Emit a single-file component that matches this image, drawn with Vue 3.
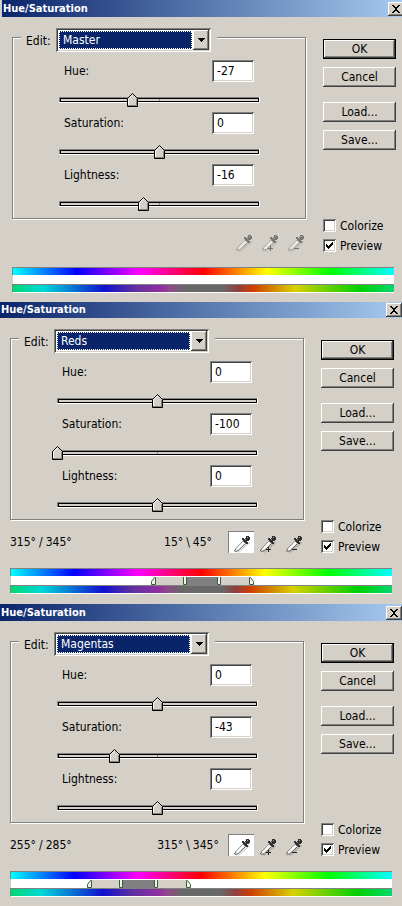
<script setup>
import { reactive } from 'vue'

const editOptions = ['Master', 'Reds', 'Yellows', 'Greens', 'Cyans', 'Blues', 'Magentas']

const pickers = [
  { name: 'Eyedropper', sign: '' },
  { name: 'Add to sample', sign: 'M6 13.5h5M8.5 11v5' },
  { name: 'Subtract from sample', sign: 'M6 13.5h5' }
]

function sliders(hue, saturation, lightness) {
  return [
    { label: 'Hue:', value: hue },
    { label: 'Saturation:', value: saturation },
    { label: 'Lightness:', value: lightness }
  ]
}

const dialogs = reactive([
  { id: 'master', edit: 'Master', sliders: sliders(-27, 0, -16), range: null, colorize: false, preview: true },
  { id: 'reds', edit: 'Reds', sliders: sliders(0, -100, 0), range: [315, 345, 15, 45], colorize: false, preview: true },
  { id: 'magentas', edit: 'Magentas', sliders: sliders(0, -43, 0), range: [255, 285, 315, 345], colorize: false, preview: true }
])

// the colour bar starts at 180 degrees and wraps around
function hueToPercent(deg) {
  return (((deg + 180) % 360) / 360) * 100
}

function segment(range, from, to) {
  return { width: hueToPercent(range[to]) - hueToPercent(range[from]) + '%' }
}
</script>

<template>
  <main class="stack">
    <section v-for="d in dialogs" :key="d.id" class="dialog" :class="d.id">
      <header class="titlebar">
        <h2>Hue/Saturation</h2>
        <button type="button" class="close" aria-label="Close">
          <svg width="8" height="8" viewBox="0 0 8 8">
            <path d="M0 0h2v1h1v1h2v-1h1v-1h2v1h-1v1h-1v1h-1v2h1v1h1v1h1v1h-2v-1h-1v-1h-2v1h-1v1h-2v-1h1v-1h1v-1h1v-2h-1v-1h-1v-1h-1z" />
          </svg>
        </button>
      </header>

      <div class="body">
        <div class="left">
          <fieldset>
            <legend>
              <label :for="d.id + '-edit'">Edit:</label>
              <span class="combo">
                <select :id="d.id + '-edit'" v-model="d.edit">
                  <option v-for="o in editOptions" :key="o">{{ o }}</option>
                </select>
                <span class="arrow">
                  <svg width="7" height="4" viewBox="0 0 7 4"><path d="M0 0h7v1h-1v1h-1v1h-1v1h-1v-1h-1v-1h-1v-1h-1z" /></svg>
                </span>
              </span>
            </legend>
            <div v-for="(s, i) in d.sliders" :key="s.label" class="setting">
              <div class="setting-head">
                <label :for="d.id + '-value-' + i">{{ s.label }}</label>
                <input :id="d.id + '-value-' + i" v-model="s.value" type="text" class="value">
              </div>
              <input v-model.number="s.value" type="range" min="-100" max="100" class="slider" :aria-label="s.label">
            </div>
          </fieldset>

          <div class="tools">
            <template v-if="d.range">
              <span class="degrees"><span>{{ d.range[0] }}°</span><span>/</span><span>{{ d.range[1] }}°</span></span>
              <span class="degrees outer"><span>{{ d.range[2] }}°</span><span>\</span><span>{{ d.range[3] }}°</span></span>
            </template>
            <div class="pickers">
              <button
                v-for="(p, i) in pickers"
                :key="p.name"
                type="button"
                :class="{ selected: d.range && i === 0 }"
                :disabled="!d.range"
                :aria-label="p.name"
              >
                <svg width="17" height="17" viewBox="0 0 17 17">
                  <path class="shade" d="M3.5 16.5L15.5 6.5" />
                  <path class="tube" d="M9.5 5L11.5 7.5L4 14.5L1.5 15.5L.5 15L2 12.5Z" />
                  <path class="glint" d="M9.5 6.5L3 13.5" />
                  <path class="bulb" d="M12 0h3v1h1v3h-1v1h-2v1h1v2h-2v-1h-1v-1h-1v-1h-1v-1h-1v-2h2v1h1v-1h1z" />
                  <path class="spot" d="M13 1.5h1M11 3.5h1" />
                  <path v-if="p.sign" class="sign" :d="p.sign" />
                </svg>
              </button>
            </div>
          </div>
        </div>

        <div class="right">
          <button type="button" class="btn default">OK</button>
          <button type="button" class="btn">Cancel</button>
          <button type="button" class="btn spaced">Load...</button>
          <button type="button" class="btn">Save...</button>
          <div class="checks">
            <label><input v-model="d.colorize" type="checkbox">Colorize</label>
            <label><input v-model="d.preview" type="checkbox">Preview</label>
          </div>
        </div>
      </div>

      <div class="bars">
        <div class="bar before"></div>
        <div class="band">
          <template v-if="d.range">
            <div :style="{ width: hueToPercent(d.range[0]) + '%' }"></div>
            <div class="falloff" :style="segment(d.range, 0, 1)"></div>
            <div class="full" :style="segment(d.range, 1, 2)"></div>
            <div class="falloff" :style="segment(d.range, 2, 3)"></div>
            <svg
              v-for="(deg, i) in d.range"
              :key="i"
              class="handle"
              :class="{ lower: i < 2 }"
              :style="{ left: hueToPercent(deg) + '%' }"
              width="5"
              height="8"
              viewBox="0 0 5 8"
            >
              <path v-if="i === 0" d="M4.5 .5V7.5H.5V4.5L3.5 .5Z" />
              <path v-else-if="i === 3" d="M.5 .5V7.5H4.5V4.5L1.5 .5Z" />
              <path v-else d="M.5 0V7.5H3.5V0" />
            </svg>
          </template>
        </div>
        <div class="bar after"></div>
      </div>
    </section>
  </main>
</template>

<style>
body {
  margin: 0;
  background: #d4d0c8;
}
</style>

<style scoped>
* {
  box-sizing: border-box;
}

.stack {
  overflow: hidden;
  background: #d4d0c8;
  color: #000;
  font: 12px/14px "DejaVu Sans Condensed", "DejaVu Sans", sans-serif;
}

button,
input,
select {
  margin: 0;
  padding: 0;
  border: 0;
  border-radius: 0;
  color: inherit;
  font: inherit;
  appearance: none;
}

.dialog {
  min-height: 302px;
}

.dialog.master {
  margin: 0 -2px 0 2px;
}

.titlebar {
  display: flex;
  align-items: center;
  justify-content: space-between;
  height: 17px;
  padding-left: 1px;
  background: linear-gradient(to right, #0a246a, #a6caf0);
}

.reds .titlebar {
  height: 16px;
}

.titlebar h2 {
  margin: 0;
  color: #fff;
  font-size: 11px;
  line-height: 14px;
  font-weight: bold;
}

.close {
  display: flex;
  align-items: center;
  justify-content: center;
  width: 16px;
  height: 14px;
  background: #d4d0c8;
  box-shadow: inset -1px -1px #404040, inset 1px 1px #fff, inset -2px -2px #808080;
}

.body {
  display: flex;
  gap: 15px;
  padding: 11px 8px 0 10px;
}

.left {
  flex: 1;
  min-width: 0;
}

fieldset {
  min-width: 0;
  margin: 0 2px 0 0;
  padding: 14px 0 7px;
  border: 1px solid #808080;
  box-shadow: 1px 1px #fff, inset 1px 1px #fff;
}

legend {
  display: flex;
  align-items: flex-start;
  height: 18px;
  margin-left: 8px;
  padding: 0 6px 0 5px;
  background: #d4d0c8;
}

legend label {
  width: 30px;
  padding-top: 6px;
}

.combo {
  display: flex;
  width: 155px;
  height: 24px;
  padding: 2px;
  background: #fff;
  box-shadow: inset 1px 1px #808080, inset -1px -1px #fff, inset 2px 2px #404040, inset -2px -2px #d4d0c8;
}

.combo select {
  flex: 1;
  margin: 1px;
  padding: 0 3px;
  border: 1px dotted #fff;
  background: #0a246a;
  color: #fff;
}

.arrow {
  display: flex;
  align-items: center;
  justify-content: center;
  width: 16px;
  background: #d4d0c8;
  box-shadow: inset -1px -1px #404040, inset 1px 1px #fff, inset -2px -2px #808080;
}

.setting {
  height: 52px;
}

.setting:last-child {
  height: 47px;
}

.setting-head {
  display: flex;
  align-items: center;
  padding-left: 51px;
}

.setting-head label {
  width: 148px;
}

.value {
  width: 42px;
  height: 22px;
  padding: 0 5px;
  background: #fff;
  box-shadow: inset 1px 1px #808080, inset -1px -1px #fff, inset 2px 2px #404040, inset -2px -2px #d4d0c8;
}

.slider {
  display: block;
  width: 211px;
  height: 14px;
  margin: 11px 0 0 41px;
  background:
    linear-gradient(#808080, #808080) 105px 6px / 1px 2px no-repeat,
    linear-gradient(#808080 1px, #000 1px 2px, #d4d0c8 2px 4px, #000 4px 5px, #fff 5px) 5px 4px / 201px 6px no-repeat;
}

.slider::-webkit-slider-runnable-track {
  height: 14px;
  background:
    linear-gradient(#808080, #808080) 5px 4px / 1px 5px no-repeat,
    linear-gradient(#000, #000) 6px 5px / 1px 4px no-repeat,
    linear-gradient(#000, #000) 204px 5px / 1px 4px no-repeat,
    linear-gradient(#fff, #fff) 205px 4px / 1px 6px no-repeat;
}

.slider::-webkit-slider-thumb {
  width: 11px;
  height: 14px;
  background: url("data:image/svg+xml,%3Csvg xmlns='http://www.w3.org/2000/svg' viewBox='0 0 11 14'%3E%3Cpath d='M.5 13.5V5.5L5.5 .5L10.5 5.5V13.5Z' fill='%23d4d0c8' stroke='%23000'/%3E%3Cpath d='M1.5 12V6L5.5 2' fill='none' stroke='%23fff'/%3E%3Cpath d='M1 12.5H9.5V6' fill='none' stroke='%23808080'/%3E%3C/svg%3E");
  appearance: none;
}

.tools {
  display: flex;
  align-items: center;
  height: 22px;
  margin-top: 11px;
}

.degrees {
  display: flex;
  gap: 3px;
  width: 64px;
}

.degrees.outer {
  justify-content: center;
  margin-left: 82px;
}

.pickers {
  display: flex;
  margin-left: auto;
}

.pickers button {
  width: 26px;
  height: 22px;
  padding: 4px 2px 0 6px;
  background: none;
}

.pickers button.selected {
  background: #fff;
  box-shadow: inset 1px 1px #808080;
}

.pickers button:disabled {
  opacity: 0.55;
}

.pickers svg {
  display: block;
}

.shade {
  fill: none;
  stroke: #000;
  stroke-opacity: 0.15;
  stroke-width: 2;
}

.tube {
  fill: #fff;
  stroke: #555;
}

.glint {
  stroke: #fff;
  stroke-width: 2;
}

.bulb {
  fill: #303030;
}

.spot {
  stroke: #999;
}

.sign {
  fill: none;
  stroke: #222;
}

.right {
  display: flex;
  flex-direction: column;
  gap: 8px;
  width: 73px;
  padding-top: 11px;
}

.btn {
  height: 20px;
  background: #d4d0c8;
  text-align: center;
  box-shadow: inset -1px -1px #404040, inset 1px 1px #fff, inset -2px -2px #808080;
}

.btn.default {
  border: 1px solid #000;
}

.btn.spaced {
  margin-top: 7px;
}

.checks {
  display: flex;
  flex-direction: column;
  gap: 7px;
  margin-top: auto;
}

.checks label {
  display: flex;
  align-items: center;
  gap: 4px;
  height: 13px;
}

.checks input {
  width: 13px;
  height: 13px;
  background: #fff;
  box-shadow: inset 1px 1px #808080, inset -1px -1px #fff, inset 2px 2px #404040, inset -2px -2px #d4d0c8;
}

.checks input:checked {
  background: #fff url("data:image/svg+xml,%3Csvg xmlns='http://www.w3.org/2000/svg' viewBox='0 0 13 13'%3E%3Cpath d='M3 5v3h1v1h1v1h1v-1h1v-1h1v-1h1v-1h1v-3h-1v1h-1v1h-1v1h-1v1h-1v-1h-1v-1z'/%3E%3C/svg%3E");
}

.bars {
  margin: 15px 10px 0;
}

.bar {
  height: 9px;
  border: solid #808080;
  border-width: 1px 0 0 1px;
  border-bottom: 1px solid #fff;
}

.before {
  background: linear-gradient(to right, #0ff, #00f, #f0f, #f00, #ff0, #0f0, #0ff);
}

.after {
  background: linear-gradient(
    to right,
    #00d870,
    #00d8d8 8%,
    #1010d0 24%,
    #6030a0 32%,
    #9030a0 39%,
    #904888 41%,
    #686868 45%,
    #686868 55%,
    #904040 59%,
    #d04000 63%,
    #d8d000 74%,
    #00d000 91%,
    #00d870
  );
}

.band {
  position: relative;
  display: flex;
  height: 8px;
  margin-left: 1px;
  background: #fff;
}

.falloff {
  background: #d4d0c8;
}

.full {
  background: #808080;
}

.handle {
  position: absolute;
  top: 0;
  fill: #e8f8e4;
  stroke: #3c5a3c;
}

/* lower handles end at their hue, upper ones start from it */
.handle.lower {
  margin-left: -3px;
}
</style>
